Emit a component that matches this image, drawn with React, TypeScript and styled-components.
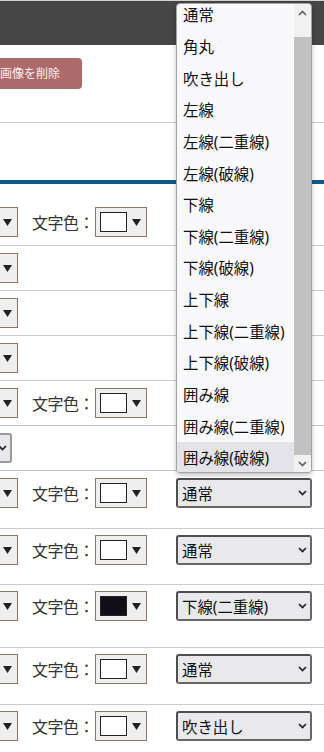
import React from 'react';
import styled, { createGlobalStyle } from 'styled-components';

const GlobalStyle = createGlobalStyle`
  html, body {
    margin: 0;
    padding: 0;
    background: #fff;
  }
  body {
    font-family: "Noto Sans", "Noto Sans CJK JP", sans-serif;
    color: #333;
  }
`;

const Page = styled.div`
  position: relative;
  width: 324px;
  height: 752px;
  overflow: hidden;
  background: #fff;
`;

const Header = styled.div`
  height: 44px;
  border-top: 1px solid #d2d2d2;
  background-color: #464646;
`;

const Toolbar = styled.div`
  box-sizing: border-box;
  height: 78px;
  padding-top: 13px;
  border-bottom: 1px solid #cccccc;
`;

const DeleteButton = styled.button`
  height: 31px;
  margin-left: -22px;
  padding: 0 22px;
  border: none;
  border-radius: 4px;
  background-color: #ad6a6a;
  color: #fdf1f1;
  font-family: inherit;
  font-size: 12px;
  line-height: 31px;
`;

const Blank = styled.div`
  height: 57px;
`;

const BlueRule = styled.div`
  height: 4px;
  background-color: #0e5a8a;
`;

const Row = styled.div<{ $top: number; $bottom: number }>`
  display: flex;
  align-items: center;
  padding: ${(p) => p.$top}px 0 ${(p) => p.$bottom}px;
  border-bottom: 1px solid #cccccc;
`;

const Picker = styled.div<{ $edge?: boolean }>`
  box-sizing: border-box;
  flex: none;
  width: 52px;
  height: 30px;
  margin-left: ${(p) => (p.$edge ? '-34px' : '0')};
  padding: 0 5px 0 4px;
  display: flex;
  align-items: center;
  justify-content: space-between;
  border: 1px solid #8c7762;
  background-color: #efefef;
`;

const Swatch = styled.span<{ $color: string }>`
  box-sizing: border-box;
  width: 27px;
  height: 20px;
  border: 1px solid #222;
  background-color: ${(p) => p.$color};
`;

const Label = styled.span`
  flex: none;
  width: 63px;
  margin-left: 14px;
  font-size: 16px;
  letter-spacing: -0.5px;
  white-space: nowrap;
  color: #333;
`;

const Select = styled.div<{ $stub?: boolean }>`
  box-sizing: border-box;
  flex: none;
  width: 136px;
  height: 30px;
  margin-left: ${(p) => (p.$stub ? '-124px' : '29px')};
  padding: 0 3px 0 4px;
  display: flex;
  align-items: center;
  justify-content: space-between;
  border: 2px solid ${(p) => (p.$stub ? '#9a9a9a' : '#666')};
  border-top-color: ${(p) => (p.$stub ? '#9a9a9a' : '#4e4e4e')};
  border-left-color: ${(p) => (p.$stub ? '#9a9a9a' : '#4e4e4e')};
  border-radius: 3px;
  background-color: #e9e9ed;
  font-size: 15.4px;
  color: #111;
  white-space: nowrap;
`;

const Popup = styled.div`
  position: absolute;
  top: 3px;
  left: 176px;
  box-sizing: border-box;
  width: 136px;
  height: 470px;
  display: flex;
  overflow: hidden;
  border: 1px solid #a3a3a3;
  border-radius: 4px;
  background-color: #f9f9fb;
  box-shadow: 0 2px 5px rgba(0, 0, 0, 0.25);
`;

const OptionList = styled.div`
  flex: 1;
  overflow: hidden;
`;

const OptionTrack = styled.div`
  margin-top: -5px;
`;

const Option = styled.div<{ $active?: boolean }>`
  height: 31.65px;
  padding-left: 6px;
  display: flex;
  align-items: center;
  font-size: 15.4px;
  color: #111;
  white-space: nowrap;
  background-color: ${(p) => (p.$active ? '#e3e3e9' : 'transparent')};
`;

const Scrollbar = styled.div`
  flex: none;
  width: 17px;
  display: flex;
  flex-direction: column;
  background-color: #f1f1f1;
`;

const ScrollArrow = styled.div`
  height: 17px;
  display: flex;
  align-items: center;
  justify-content: center;
`;

const ScrollGap = styled.div`
  height: 16px;
`;

const Thumb = styled.div`
  flex: 1;
  background-color: #c1c1c1;
`;

const Caret = () => (
  <svg width="9" height="7" viewBox="0 0 9 7">
    <polygon points="0,0 9,0 4.5,7" fill="#222" />
  </svg>
);

const Chevron = ({ up, color = '#222' }: { up?: boolean; color?: string }) => (
  <svg width="9" height="6" viewBox="0 0 9 6">
    <path
      d={up ? 'M1 5 L4.5 1.5 L8 5' : 'M1 1 L4.5 4.5 L8 1'}
      fill="none"
      stroke={color}
      strokeWidth="1.7"
    />
  </svg>
);

const ColorPicker = ({ color = '#fff', edge }: { color?: string; edge?: boolean }) => (
  <Picker $edge={edge}>
    <Swatch $color={color} />
    <Caret />
  </Picker>
);

const options = [
  '通常',
  '角丸',
  '吹き出し',
  '左線',
  '左線(二重線)',
  '左線(破線)',
  '下線',
  '下線(二重線)',
  '下線(破線)',
  '上下線',
  '上下線(二重線)',
  '上下線(破線)',
  '囲み線',
  '囲み線(二重線)',
  '囲み線(破線)',
];

const styledRows = [
  { top: 7, bottom: 20, text: '通常', color: '#fff' },
  { top: 6, bottom: 19, text: '通常', color: '#fff' },
  { top: 6, bottom: 26, text: '下線(二重線)', color: '#110f15' },
  { top: 6, bottom: 20, text: '通常', color: '#fff' },
  { top: 6, bottom: 20, text: '吹き出し', color: '#fff' },
];

const App: React.FC = () => {
  return (
    <Page>
      <GlobalStyle />
      <Header />
      <Toolbar>
        <DeleteButton>画像を削除</DeleteButton>
      </Toolbar>
      <Blank />
      <BlueRule />

      <Row $top={23} $bottom={8}>
        <ColorPicker edge />
        <Label>文字色：</Label>
        <ColorPicker />
      </Row>
      <Row $top={7} $bottom={7}>
        <ColorPicker edge />
      </Row>
      <Row $top={7} $bottom={7}>
        <ColorPicker edge />
      </Row>
      <Row $top={7} $bottom={7}>
        <ColorPicker edge />
      </Row>
      <Row $top={7} $bottom={7}>
        <ColorPicker edge />
        <Label>文字色：</Label>
        <ColorPicker />
      </Row>
      <Row $top={7} $bottom={7}>
        <Select $stub>
          <span>通常</span>
          <Chevron />
        </Select>
      </Row>

      {styledRows.map((row, i) => (
        <Row key={i} $top={row.top} $bottom={row.bottom}>
          <ColorPicker edge />
          <Label>文字色：</Label>
          <ColorPicker color={row.color} />
          <Select>
            <span>{row.text}</span>
            <Chevron />
          </Select>
        </Row>
      ))}

      <Popup>
        <OptionList>
          <OptionTrack>
            {options.map((o, i) => (
              <Option key={o} $active={i === options.length - 1}>
                {o}
              </Option>
            ))}
          </OptionTrack>
        </OptionList>
        <Scrollbar>
          <ScrollArrow>
            <Chevron up color="#606060" />
          </ScrollArrow>
          <ScrollGap />
          <Thumb />
          <ScrollArrow>
            <Chevron color="#606060" />
          </ScrollArrow>
        </Scrollbar>
      </Popup>
    </Page>
  );
};

export default App;
